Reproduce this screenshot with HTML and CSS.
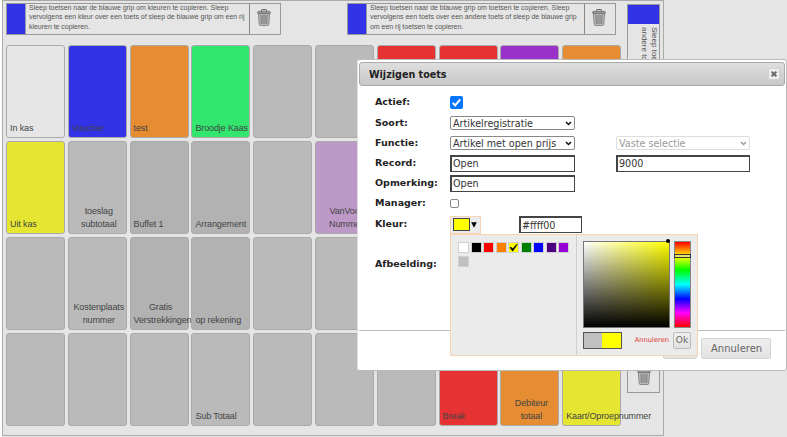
FILE: index.html
```html
<!DOCTYPE html>
<html lang="nl">
<head>
    <meta charset="UTF-8">
    <meta name="viewport" content="width=device-width, initial-scale=1.0">
    <title>Wijzigen toets</title>
    <link rel="stylesheet" href="styles.css">
</head>
<body>
    <svg class="defs" width="0" height="0">
        <symbol id="trash" viewBox="0 0 14 17">
            <path d="M4.5 2.5V1.2Q4.5.6 5.2.6H8.8Q9.5.6 9.5 1.2V2.5" fill="none" stroke="#555"/>
            <path d="M1.4 4.5H12.6L11.8 15.3Q11.7 16.5 10.5 16.5H3.5Q2.3 16.5 2.2 15.3Z" fill="#bbb" stroke="#777" stroke-width=".8"/>
            <path d="M4 6L4.3 15M6 6V15M8 6V15M10 6L9.7 15" fill="none" stroke="#666" stroke-width=".8"/>
            <rect x=".6" y="2.3" width="12.8" height="2.4" rx="1" fill="#999" stroke="#666" stroke-width=".7"/>
        </symbol>
        <symbol id="chevron" viewBox="0 0 7 5">
            <path d="M1 1L3.5 3.5L6 1" fill="none" stroke="currentColor" stroke-width="1.5"/>
        </symbol>
    </svg>

    <div class="board">
        <div class="main">
            <div class="grips">
                <div class="grip">
                    <div class="handle"></div>
                    <p>Sleep toetsen naar de blauwe grip om kleuren te copieren. Sleep<br>vervolgens een kleur over een toets of sleep de blauwe grip om een rij<br>kleuren te copieren.</p>
                    <div class="bin"><svg><use href="#trash"/></svg></div>
                </div>
                <div class="grip grip-keys">
                    <div class="handle"></div>
                    <p>Sleep toetsen naar de blauwe grip om toetsen te copieren. Sleep<br>vervolgens een toets over een andere toets of sleep de blauwe grip<br>om een rij toetsen te copieren.</p>
                    <div class="bin"><svg><use href="#trash"/></svg></div>
                </div>
            </div>
            <div class="keys">
                <div class="key light"><span>In kas</span></div>
                <div class="key blue"><span>Voucher</span></div>
                <div class="key orange"><span>test</span></div>
                <div class="key green"><span>Broodje Kaas</span></div>
                <div class="key"></div>
                <div class="key"></div>
                <div class="key red"></div>
                <div class="key red"></div>
                <div class="key purple"></div>
                <div class="key orange"></div>

                <div class="key yellow"><span>Uit kas</span></div>
                <div class="key two"><span>toeslag<br>subtotaal</span></div>
                <div class="key dark"><span>Buffet 1</span></div>
                <div class="key dark"><span>Arrangement</span></div>
                <div class="key"></div>
                <div class="key lilac two"><span>VanVoor<br>Nummer</span></div>
                <div class="key"></div>
                <div class="key"></div>
                <div class="key"></div>
                <div class="key"></div>

                <div class="key"></div>
                <div class="key two"><span>Kostenplaats<br>nummer</span></div>
                <div class="key dark two"><span>Gratis<br>Verstrekkingen</span></div>
                <div class="key dark"><span>op rekening</span></div>
                <div class="key"></div>
                <div class="key"></div>
                <div class="key"></div>
                <div class="key"></div>
                <div class="key"></div>
                <div class="key"></div>

                <div class="key"></div>
                <div class="key"></div>
                <div class="key"></div>
                <div class="key"><span>Sub Totaal</span></div>
                <div class="key"></div>
                <div class="key"></div>
                <div class="key"></div>
                <div class="key red"><span>Break</span></div>
                <div class="key orange two"><span>Debiteur<br>totaal</span></div>
                <div class="key yellow"><span>Kaart/Oproepnummer</span></div>
            </div>
        </div>
        <div class="side">
            <div class="handle"></div>
            <p>Sleep toets<br>andere toets</p>
            <div class="bin"><svg><use href="#trash"/></svg></div>
        </div>
    </div>

    <div class="dialog">
        <div class="titlebar">
            <span>Wijzigen toets</span>
            <div class="close"><svg viewBox="0 0 8 8"><path d="M1.6 1.6L6.4 6.4M6.4 1.6L1.6 6.4" stroke="#666" stroke-width="2"/></svg></div>
        </div>
        <div class="form">
            <label>Actief:</label>
            <div class="check checked"><svg viewBox="0 0 13 13"><path d="M2.7 6.8L5.2 9.4L10.2 3.4" fill="none" stroke="#fff" stroke-width="2"/></svg></div>
            <i></i>
            <label>Soort:</label>
            <div class="select"><span>Artikelregistratie</span><svg><use href="#chevron"/></svg></div>
            <i></i>
            <label>Functie:</label>
            <div class="select"><span>Artikel met open prijs</span><svg><use href="#chevron"/></svg></div>
            <div class="select disabled"><span>Vaste selectie</span><svg><use href="#chevron"/></svg></div>
            <label>Record:</label>
            <input type="text" value="Open">
            <input type="text" value="9000">
            <label>Opmerking:</label>
            <input type="text" value="Open">
            <i></i>
            <label>Manager:</label>
            <div class="check small"></div>
            <i></i>
            <label>Kleur:</label>
            <div class="color">
                <div class="replacer"><div class="preview"></div><svg viewBox="0 0 7 7"><path d="M.2 .4H6.8L3.5 6.8Z"/></svg></div>
                <input type="text" value="#ffff00">
                <div class="picker">
                    <div class="palette">
                        <b class="c-white"></b><b class="c-black"></b><b class="c-red"></b><b class="c-orange"></b><b class="c-yellow"><svg viewBox="0 0 10 10"><path d="M.6 5.3L2.2 4.1L4 6L8.9 .8L9.7 1.5L4.2 9.4Z"/></svg></b><b class="c-green"></b><b class="c-blue"></b><b class="c-indigo"></b><b class="c-violet"></b><b class="c-silver"></b>
                    </div>
                    <div class="mixer">
                        <div class="fields">
                            <div class="shade"><div class="dot"></div></div>
                            <div class="hue"><div class="slider"></div></div>
                        </div>
                        <div class="actions">
                            <div class="compare"></div>
                            <a>Annuleren</a>
                            <button class="ok">Ok</button>
                        </div>
                    </div>
                </div>
            </div>
            <i></i>
            <label>Afbeelding:</label>
        </div>
        <div class="buttons">
            <button class="save"></button>
            <button class="cancel">Annuleren</button>
        </div>
    </div>
</body>
</html>
```

FILE: styles.css
```css
* {
    box-sizing: border-box;
}
body {
    margin: 0;
    height: 437px;
    padding-left: 2px;
    overflow: hidden;
    background: linear-gradient(90deg, #fff 2px, #e5e5e5 2px);
    font-family: "Liberation Sans", Arial, sans-serif;
    color: #444;
}
p {
    margin: 0;
}
.defs {
    display: block;
}
.board {
    display: flex;
    width: 662px;
    height: 436px;
    border: 1px solid #aaa;
    padding: 1.5px 3px 0;
}
.main {
    width: 615px;
}
.grips {
    display: flex;
    height: 42.5px;
    gap: 66px;
}
.grip {
    display: flex;
    width: 275px;
    height: 32px;
    border: 1px solid #999;
    color: #555;
}
.grip-keys {
    width: 269px;
}
.grip p {
    flex: 1;
    margin-top: -1px;
    padding-left: 3px;
    white-space: nowrap;
    font-size: 7px;
    line-height: 9.6px;
    letter-spacing: -.03px;
}
.handle {
    width: 19px;
    background: #3232e6;
    border-right: 1px solid #99a;
}
.bin {
    display: flex;
    width: 31px;
    border-left: 1px solid #888;
    align-items: center;
    justify-content: center;
}
.grip .bin {
    padding: 0 2px 2px 0;
}
.bin svg {
    width: 14px;
    height: 17px;
}
.keys {
    display: grid;
    grid-template-columns: repeat(10, 59px);
    grid-auto-rows: 93px;
    gap: 3px 2.8px;
}
.key {
    display: flex;
    align-items: flex-end;
    padding: 0 0 3px 3px;
    border: 1px solid #aaa;
    border-radius: 3px;
    background: #bababa;
    font-size: 9px;
    line-height: 12.4px;
    letter-spacing: -.12px;
    white-space: nowrap;
    color: #444;
}
.two span {
    min-width: 100%;
    text-align: center;
}
.dark { background: #b2b2b2; }
.light { background: #e6e6e6; }
.blue { background: #3232e6; }
.orange { background: #e68c32; }
.green { background: #32e66e; }
.red { background: #e63232; }
.purple { background: #9932c8; }
.yellow { background: #e6e632; }
.lilac { background: #bd99c8; }
.side {
    display: flex;
    flex-direction: column;
    width: 33px;
    height: 389.5px;
    margin: 1px 0 0 6px;
    border: 1px solid #999;
}
.side .handle {
    width: auto;
    height: 19px;
    border: 0;
}
.side p {
    flex: 1;
    writing-mode: vertical-rl;
    padding: 3px 0 0 0;
    font-size: 8px;
    line-height: 10.5px;
    color: #555;
}
.side .bin {
    width: auto;
    height: 32px;
    border: 0;
    border-top: 1px solid #999;
}

/* dialog */
.dialog {
    position: absolute;
    left: 357px;
    top: 59px;
    width: 430px;
    height: 312px;
    padding: 2px 1px;
    border: 1px solid #bbb;
    border-left-color: #ddd;
    border-radius: 3px;
    background: #fff;
    font-family: "DejaVu Sans", Verdana, sans-serif;
    font-size: 9.5px;
}
.titlebar {
    display: flex;
    height: 24px;
    padding: 0 4px 0 9px;
    align-items: center;
    justify-content: space-between;
    border: 1px solid #aaa;
    border-radius: 3px;
    background: linear-gradient(#dedede, #c8c8c8);
    font-size: 9.6px;
    font-weight: bold;
    color: #222;
}
.close {
    display: flex;
    width: 12px;
    height: 12px;
    align-items: center;
    justify-content: center;
    border: 1px solid #d3d3d3;
    border-radius: 2px;
    background: #eee;
}
.close svg {
    width: 8px;
    height: 8px;
}
.form {
    display: grid;
    grid-template-columns: 75px 166px 134px;
    grid-template-rows: 21px 20px 20px 20px 20px 21px 21px 59px;
    align-items: center;
    height: 244.5px;
    padding: 6px 0 0 16px;
    border-bottom: 1px solid #bbb;
}
.form label {
    font-weight: bold;
    color: #222;
    transform: translateY(-1px);
}
.select,
input {
    width: 125px;
    height: 14px;
    padding: 0 2px;
    border: 1px solid #888;
    border-radius: 2px;
    background: #fff;
    font: 9.6px "DejaVu Sans", Verdana, sans-serif;
    color: #333;
}
.select {
    display: flex;
    align-items: center;
    justify-content: space-between;
    white-space: nowrap;
}
.select svg {
    width: 7px;
    height: 5px;
    color: #111;
}
.disabled {
    width: 134px;
    border-color: #ddd;
    color: #999;
}
.disabled svg {
    color: #999;
}
input {
    height: 17px;
    padding: 0 1px;
    border: 1px solid #444;
    border-width: 2px 1px 1px 2px;
    border-radius: 0;
}
input:nth-of-type(2) {
    width: 134px;
}
.check {
    width: 13px;
    height: 13px;
    border-radius: 2px;
}
.checked {
    background: #0075ff;
}
.check svg {
    display: block;
}
.small {
    width: 9px;
    height: 9px;
    border: 1px solid #888;
}
.color {
    position: relative;
    display: flex;
    align-items: center;
    gap: 38px;
}
.color input {
    width: 63px;
}
.replacer {
    display: flex;
    width: 31px;
    height: 18px;
    padding: 0 3px 0 2px;
    align-items: center;
    justify-content: space-between;
    border: 1px solid #f5d5b8;
    background: #ebebeb;
}
.replacer svg {
    width: 6px;
    height: 6px;
}
.preview {
    width: 17px;
    height: 13px;
    border: 1px solid #444;
    background: #ff0;
}
.picker {
    position: absolute;
    left: 0;
    top: 18px;
    z-index: 2;
    display: flex;
    width: 248px;
    height: 122px;
    border: 1px solid #f8d3b0;
    background: #ebebeb;
}
.palette {
    display: flex;
    flex-wrap: wrap;
    align-content: flex-start;
    width: 126px;
    gap: 2.8px 1.5px;
    padding: 7.5px 0 0 7px;
    border-right: 1px solid #d0d0d0;
}
.palette b {
    width: 11px;
    height: 11px;
    border: .5px solid #d0d0d0;
}
.palette svg {
    display: block;
}
.c-white { background: #fff; }
.c-black { background: #000; }
.c-red { background: #f00; }
.c-orange { background: #ff8000; }
.c-yellow { background: #ff0; }
.c-green { background: #008000; }
.c-blue { background: #00f; }
.c-indigo { background: #4b0082; }
.c-violet { background: #9400d3; }
.c-silver { background: #c0c0c0; }
.mixer {
    flex: 1;
    padding: 6px 6px 0 6px;
}
.fields {
    display: flex;
    justify-content: space-between;
}
.shade {
    position: relative;
    width: 87px;
    height: 87px;
    border: 1px solid #777;
    background: linear-gradient(to top, #000, transparent), linear-gradient(to right, #fff, #ff0);
}
.dot {
    position: absolute;
    right: -1px;
    top: -3px;
    width: 4px;
    height: 4px;
    border-radius: 50%;
    background: #000;
}
.hue {
    position: relative;
    width: 17px;
    height: 87px;
    border: 1px solid #888;
    background: linear-gradient(#f00, #ff0 17%, #0f0 33%, #0ff 50%, #00f 67%, #f0f 83%, #f00);
}
.slider {
    position: absolute;
    left: -1px;
    top: 12px;
    width: 17px;
    height: 4px;
    border: 1px solid #333;
    background: #e5e56a;
}
.actions {
    display: flex;
    align-items: center;
    padding-top: 4px;
}
.compare {
    width: 39px;
    height: 17px;
    border: 1px solid #555;
    background: linear-gradient(90deg, #c0c0c0 50%, #ff0 50%);
}
.actions a {
    margin-left: auto;
    font-size: 6.7px;
    color: #d33;
}
button {
    height: 21px;
    padding: 0 9px;
    border: 1px solid #d3d3d3;
    border-radius: 2px;
    background: linear-gradient(#efefef, #e2e2e2);
    font: 10px "DejaVu Sans", Verdana, sans-serif;
    color: #666;
}
.actions .ok {
    width: 18px;
    height: 17px;
    margin-left: 4px;
    padding: 0;
    border-color: #bbb;
    font-size: 9px;
}
.buttons {
    display: flex;
    justify-content: flex-end;
    gap: 4px;
    padding: 7.5px 14px 0 0;
}
.save {
    width: 34px;
}
.cancel {
    width: 70px;
}
```
